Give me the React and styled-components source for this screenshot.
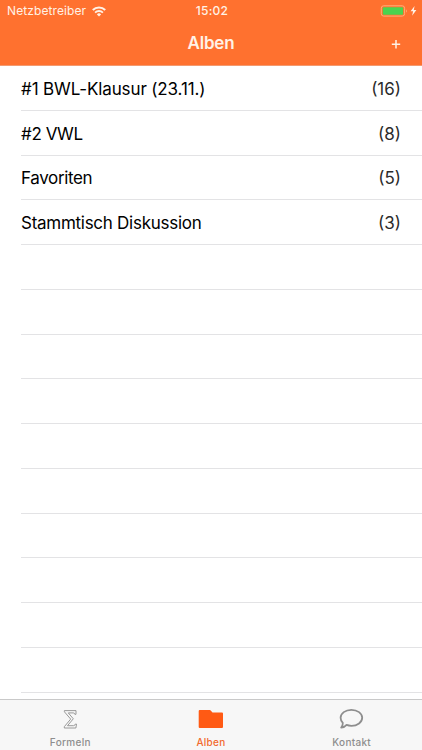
import React from "react"
import styled, { createGlobalStyle } from "styled-components"

const GlobalStyle = createGlobalStyle`
  * {
    box-sizing: border-box;
  }
  body {
    margin: 0;
    background: #fff;
    font-family: Inter, "Liberation Sans", sans-serif;
  }
`

const Screen = styled.div`
  display: flex;
  flex-direction: column;
  width: 422px;
  height: 750px;
  overflow: hidden;
  background: #fff;
`

const Header = styled.header`
  flex: none;
  height: 66px;
  background: #ff712f;
  border-bottom: 1px solid #f39a70;
  color: #fff2e6;
`

const StatusBar = styled.div`
  display: grid;
  grid-template-columns: 1fr auto 1fr;
  align-items: center;
  height: 22px;
  padding: 0 5px 0 7px;
`

const Carrier = styled.div`
  display: flex;
  align-items: center;
  gap: 6px;
  font-size: 12px;
  line-height: 14px;
  letter-spacing: 0.1px;
`

const Time = styled.div`
  font-size: 12px;
  font-weight: 500;
  line-height: 14px;
  letter-spacing: 0.25px;
`

const Battery = styled.div`
  display: flex;
  justify-content: flex-end;
`

const NavBar = styled.div`
  display: grid;
  grid-template-columns: 1fr auto 1fr;
  align-items: center;
  height: 43px;
  padding: 0 21px;
`

const Title = styled.h1`
  grid-column: 2;
  margin: 0;
  padding-bottom: 1px;
  font-size: 17px;
  font-weight: 600;
  line-height: 21px;
  letter-spacing: -0.2px;
`

const AddButton = styled.button`
  display: flex;
  justify-self: end;
  padding: 0;
  border: 0;
  background: none;
  color: inherit;
`

const List = styled.ul`
  flex: 1;
  min-height: 0;
  overflow: hidden;
  margin: 0;
  padding: 0 0 0 21px;
  list-style: none;
`

const Row = styled.li`
  display: flex;
  align-items: center;
  justify-content: space-between;
  height: 44.78px;
  padding: 2px 21px 0 0;
  border-bottom: 1px solid #e3e3e5;
  font-size: 17px;
  color: #000;
`

const Name = styled.span`
  letter-spacing: ${props => props.$spacing}px;
`

const Count = styled.span`
  color: #2b2b2b;
`

const TabBar = styled.nav`
  flex: none;
  display: grid;
  grid-template-columns: repeat(3, 1fr);
  height: 51px;
  background: #f7f7f7;
  border-top: 1px solid #c9c9c9;
`

const Tab = styled.a`
  display: flex;
  flex-direction: column;
  align-items: center;
  padding-top: 6px;
  color: ${props => (props.$active ? "#f26a2e" : "#8e8e8e")};
  font-size: 10px;
  font-weight: 500;
  line-height: 12px;
  letter-spacing: 0.3px;
`

const TabIcon = styled.svg`
  width: 30px;
  height: 26px;
  margin-bottom: 4px;
`

const WifiIcon = () => (
  <svg width="14" height="11" viewBox="0 0 14 11" fill="none" stroke="currentColor">
    <path d="M.8 4.1a8.8 8.8 0 0 1 12.4 0" strokeWidth="2.1" />
    <path d="M3.1 6.6a5.5 5.5 0 0 1 7.8 0" strokeWidth="1.8" />
    <path d="M7 10.6 4.9 8.4a3 3 0 0 1 4.2 0Z" fill="currentColor" stroke="none" />
  </svg>
)

const BatteryIcon = () => (
  <svg width="37" height="12" viewBox="0 0 37 12">
    <rect x="1.3" y=".8" width="23.3" height="10.3" rx="2.4" fill="none" stroke="#ffb078" />
    <rect x="2.8" y="2.2" width="20.3" height="7.5" rx="1" fill="#4bd34f" />
    <path d="M26 4.2q1.7 1.7 0 3.5Z" fill="#ffb885" />
    <path d="M34.6.9 30.6 6.3h2.5l-1 4.5 4.3-5.9h-2.6Z" fill="#fff2e6" />
  </svg>
)

const albums = [
  { name: "#1 BWL-Klausur (23.11.)", count: 16, spacing: -0.13 },
  { name: "#2 VWL", count: 8, spacing: -0.38 },
  { name: "Favoriten", count: 5, spacing: -0.36 },
  { name: "Stammtisch Diskussion", count: 3, spacing: -0.27 }
]

const emptyRows = Array.from({ length: 10 }, (_, i) => i)

const App = () => (
  <>
    <GlobalStyle />
    <Screen>
      <Header>
        <StatusBar>
          <Carrier>
            Netzbetreiber
            <WifiIcon />
          </Carrier>
          <Time>15:02</Time>
          <Battery>
            <BatteryIcon />
          </Battery>
        </StatusBar>
        <NavBar>
          <Title>Alben</Title>
          <AddButton aria-label="Album hinzufügen">
            <svg width="10" height="10" viewBox="0 0 10 10" stroke="currentColor">
              <path d="M5 1v8.4M.8 5.2h8.4" strokeWidth="1.5" />
            </svg>
          </AddButton>
        </NavBar>
      </Header>

      <List>
        {albums.map(album => (
          <Row key={album.name}>
            <Name $spacing={album.spacing}>{album.name}</Name>
            <Count>({album.count})</Count>
          </Row>
        ))}
        {emptyRows.map(i => (
          <Row key={i} />
        ))}
      </List>

      <TabBar>
        <Tab>
          <TabIcon viewBox="0 0 30 26" fill="none" stroke="currentColor">
            <path
              d="M9.4 4.6H21v3.7h-1.2q-.2-1.4-1.5-1.4h-5l5 5.9-5.8 6.9h6q1.3 0 1.8-1.6h1.2l-.6 3.9H9.3v-1.3l6.4-7.6-6.3-7.3Z"
              strokeWidth=".9"
            />
          </TabIcon>
          Formeln
        </Tab>
        <Tab $active>
          <TabIcon viewBox="0 0 30 26">
            <path
              d="M2.7 5.2q0-1.1 1-1.1h10.2q.5 0 .8.4l1.8 2.1H26q1 0 1 1v13.3q0 1-1 1H3.7q-1 0-1-1Z"
              fill="#ff5a14"
            />
          </TabIcon>
          Alben
        </Tab>
        <Tab>
          <TabIcon viewBox="0.9 0 30 26" fill="none" stroke="currentColor">
            <path
              d="M15.3 3.8c6 0 10.8 3.6 10.8 8s-4.8 8-10.8 8c-1.8 0-3.4-.3-4.8-.9-1.3 1.5-3.2 2.6-5.4 2.8 1-1.1 1.7-2.9 1.6-4.8-1.4-1.4-2.2-3.1-2.2-5.1 0-4.4 4.8-8 10.8-8Z"
              strokeWidth="1.8"
              strokeLinejoin="round"
            />
          </TabIcon>
          Kontakt
        </Tab>
      </TabBar>
    </Screen>
  </>
)

export default App
